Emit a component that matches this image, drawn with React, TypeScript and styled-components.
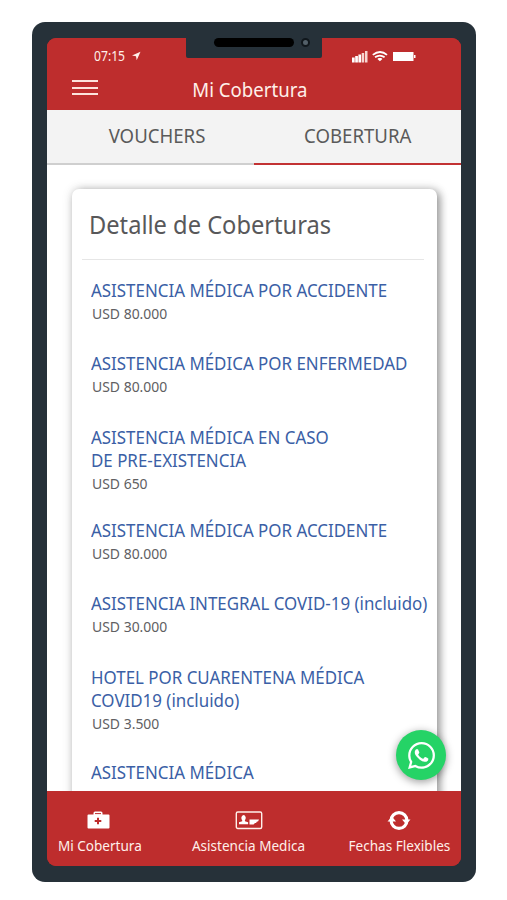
import React from 'react';
import styled, { createGlobalStyle } from 'styled-components';

const Global = createGlobalStyle`
  * { box-sizing: border-box; }
  body { margin: 0; background: #fff; font-family: "Noto Sans", "Open Sans", sans-serif; }
`;

const Page = styled.div`
  width: 507px;
  height: 900px;
  padding: 22px 0 0 32px;
  overflow: hidden;
`;

const Phone = styled.div`
  position: relative;
  width: 444px;
  height: 859.5px;
  padding: 15.5px 15px 15.5px;
  border-radius: 13px;
  background: #263139;
`;

const Screen = styled.div`
  display: flex;
  flex-direction: column;
  position: relative;
  height: 100%;
  border-radius: 9px;
  overflow: hidden;
  background: #be2d2d;
`;

const Notch = styled.div`
  position: absolute;
  top: 15px;
  left: 154px;
  z-index: 2;
  width: 136px;
  height: 20.5px;
  padding-left: 28px;
  display: flex;
  gap: 7px;
  background: #263139;
  border-radius: 0 0 2px 2px;
`;

const Speaker = styled.div`
  width: 80px;
  height: 9px;
  margin-top: 1px;
  border-radius: 5px;
  background: #000;
`;

const Camera = styled.div`
  width: 9px;
  height: 9px;
  margin-top: 1px;
  border-radius: 50%;
  border: 2px solid #10171c;
  background: #536069;
`;

const Header = styled.header`
  flex: none;
  height: 72.5px;
  background: #be2d2d;
  color: #fff0ea;
`;

const StatusBar = styled.div`
  display: flex;
  align-items: center;
  gap: 2px;
  height: 37px;
  padding: 0 45px 0 47px;
`;

const StatusIcons = styled.svg`
  margin-left: auto;
`;

const TitleBar = styled.div`
  display: grid;
  grid-template-columns: 1fr auto 1fr;
  align-items: center;
  height: 29px;
  padding: 0 34px 0 25px;
`;

const MenuButton = styled.button`
  display: flex;
  flex-direction: column;
  justify-content: space-between;
  width: 26px;
  height: 15px;
  margin-top: -3px;
  padding: 0;
  border: 0;
  background: none;
`;

const MenuLine = styled.span`
  height: 2px;
  background: #fde3dc;
`;

const Label = styled.span<{ $size: number; $scale: number; $origin?: string }>`
  display: inline-block;
  font-size: ${p => p.$size}px;
  white-space: nowrap;
  transform: scaleX(${p => p.$scale});
  transform-origin: ${p => p.$origin ?? 'left'} center;
`;

const Tabs = styled.nav`
  flex: none;
  display: grid;
  grid-template-columns: 1fr 1fr;
  height: 55px;
  background: #f3f3f3;
`;

const Tab = styled.button<{ $active?: boolean }>`
  display: flex;
  align-items: center;
  justify-content: center;
  padding: 0 0 2px ${p => (p.$active ? 0 : 14)}px;
  border: 0;
  border-bottom: 2px solid ${p => (p.$active ? '#c23233' : '#cfcfcf')};
  background: none;
  color: #5a5a5a;
  font-family: inherit;
`;

const Content = styled.main`
  flex: 1;
  min-height: 0;
  overflow: hidden;
  padding: 23.5px 24px 0 25px;
  background: #fff;
`;

const Card = styled.section`
  height: 700px;
  padding: 13px 13px 0 10px;
  border-radius: 7px;
  background: #fff;
  box-shadow: 3px 2px 8px rgba(0, 0, 0, 0.38), 0 0 12px rgba(0, 0, 0, 0.12);
`;

const CardTitle = styled.h1`
  margin: 0;
  height: 58px;
  padding-left: 7px;
  font-size: 25px;
  line-height: 44px;
  font-weight: 400;
  color: #58585a;
  border-bottom: 1px solid #e6e6e6;
`;

const List = styled.ul`
  margin: 0;
  padding: 19px 0 0 9px;
  list-style: none;
`;

const Item = styled.li<{ $gap: number }>`
  margin-bottom: ${p => p.$gap}px;
`;

const Name = styled.div`
  height: 23px;
  line-height: 23px;
  color: #3b5fa6;
`;

const Amount = styled.div`
  height: 23px;
  padding-left: 1px;
  line-height: 22px;
  color: #606062;
`;

const BottomNav = styled.nav`
  flex: none;
  display: flex;
  justify-content: space-between;
  height: 75px;
  padding: 18px 18px 0 11px;
  background: #be2d2d;
  color: #fff0ea;
`;

const NavItem = styled.div<{ $width: number }>`
  display: flex;
  flex-direction: column;
  align-items: center;
  width: ${p => p.$width}px;
`;

const NavIcon = styled.svg<{ $shift?: number }>`
  flex: none;
  width: 28px;
  height: 22px;
  margin-left: ${p => p.$shift ?? 0}px;
  margin-bottom: 4px;
`;

const Fab = styled.button`
  position: absolute;
  right: 15px;
  bottom: 86px;
  width: 50px;
  height: 50px;
  display: flex;
  align-items: center;
  justify-content: center;
  padding: 0;
  border: 0;
  border-radius: 50%;
  background: #25d366;
  box-shadow: 0 2px 9px rgba(0, 0, 0, 0.4);
`;

const items = [
  { lines: ['ASISTENCIA MÉDICA POR ACCIDENTE'], amount: 'USD 80.000', gap: 27.6 },
  { lines: ['ASISTENCIA MÉDICA POR ENFERMEDAD'], amount: 'USD 80.000', gap: 27.6 },
  { lines: ['ASISTENCIA MÉDICA EN CASO', 'DE PRE-EXISTENCIA'], amount: 'USD 650', gap: 24 },
  { lines: ['ASISTENCIA MÉDICA POR ACCIDENTE'], amount: 'USD 80.000', gap: 27.6 },
  { lines: ['ASISTENCIA INTEGRAL COVID-19 (incluido)'], amount: 'USD 30.000', gap: 27.6 },
  { lines: ['HOTEL POR CUARENTENA MÉDICA', 'COVID19 (incluido)'], amount: 'USD 3.500', gap: 26.5 },
  { lines: ['ASISTENCIA MÉDICA'], gap: 0 },
];

export default function App() {
  return (
    <Page>
      <Global />
      <Phone>
        <Notch>
          <Speaker />
          <Camera />
        </Notch>
        <Screen>
          <Header>
            <StatusBar>
              <Label $size={13.5} $scale={0.9}>07:15</Label>
              <svg width="10" height="10" viewBox="0 0 10 10">
                <path d="M9.5.8 1 4.500l4 .7L5.700 9.300Z" fill="#fff0ea" />
              </svg>
              <StatusIcons width="64" height="14" viewBox="0 0 64 14">
                <g fill="#fff">
                  <path d="M0 8.500h2.700v5H0zM3.200 7h2.700v6.500H3.200zM6.400 5.500h2.700v8H6.400z" />
                  <path d="M9.700 4h2.500v9.500H9.700zM13 2h2.500v11.500H13z" fill="#f8d5d0" />
                  <path d="M41 3h20.500v9H41zM62 6h1.500v3H62z" />
                  <path d="m26.700 8.900 2.500 0 1.200 1-2.500 2.400-2.500-2.400z" />
                </g>
                <g fill="none" stroke="#fff" strokeWidth="1.800">
                  <path d="M20.800 5.900q7.300-5.800 14.200 0M23 8.300q4.900-3.500 9.600 0" />
                </g>
              </StatusIcons>
            </StatusBar>
            <TitleBar>
              <MenuButton aria-label="Menú">
                <MenuLine />
                <MenuLine />
                <MenuLine />
              </MenuButton>
              <Label $size={20} $scale={0.93} $origin="center">Mi Cobertura</Label>
            </TitleBar>
          </Header>
          <Tabs>
            <Tab><Label $size={20} $scale={0.93} $origin="center">VOUCHERS</Label></Tab>
            <Tab $active><Label $size={20} $scale={0.93} $origin="center">COBERTURA</Label></Tab>
          </Tabs>
          <Content>
            <Card>
              <CardTitle><Label $size={25} $scale={0.946}>Detalle de Coberturas</Label></CardTitle>
              <List>
                {items.map((item, i) => (
                  <Item key={i} $gap={item.gap}>
                    {item.lines.map(line => (
                      <Name key={line}><Label $size={17.8} $scale={0.951}>{line}</Label></Name>
                    ))}
                    {item.amount && <Amount><Label $size={14.5} $scale={0.962}>{item.amount}</Label></Amount>}
                  </Item>
                ))}
              </List>
            </Card>
          </Content>
          <BottomNav>
            <NavItem $width={84}>
              <NavIcon $shift={-4} viewBox="0 0 28 22">
                <path d="M3.500 5.500h6V4q0-1.500 1.500-1.500h6q1.500 0 1.500 1.500v1.500h6q1 0 1 1v12q0 1-1 1h-20q-1 0-1-1v-12q0-1 1-1z" fill="#fff" />
                <path d="M11 4.600h6" stroke="#be2d2d" />
                <path d="M14 8.700v6.600M10.700 12h6.600" stroke="#be2d2d" strokeWidth="2" />
              </NavIcon>
              <Label $size={14.5} $scale={0.935} $origin="center">Mi Cobertura</Label>
            </NavItem>
            <NavItem $width={91}>
              <NavIcon viewBox="0 0 28 22">
                <rect x="1.300" y="3" width="25.400" height="16.500" rx="1.500" fill="none" stroke="#fff0ea" strokeWidth="1.400" />
                <path d="M8.500 6a2.500 3 0 0 1 1.400 5.200v1l3.200 1V15.300H4v-2.100l3.200-1v-1A2.500 3 0 0 1 8.500 6zM14.500 10.500h9.500l-1 2h-1l-1 1.500h-1L18.500 15.500h-4z" fill="#fff" />
              </NavIcon>
              <Label $size={14.5} $scale={0.935} $origin="center">Asistencia Medica</Label>
            </NavItem>
            <NavItem $width={88}>
              <NavIcon viewBox="0 0 28 22">
                <circle cx="14" cy="11.500" r="7.900" fill="none" stroke="#fff" strokeWidth="3.200" />
                <path d="M2.500 12.500 7 7.500l4 5zM17 10.500h8.500L21.200 15.500z" fill="#fff" />
              </NavIcon>
              <Label $size={14.5} $scale={0.935} $origin="center">Fechas Flexibles</Label>
            </NavItem>
          </BottomNav>
          <Fab aria-label="WhatsApp">
            <svg width="27" height="27" viewBox="0 0 24 24" fill="#fff">
              <path d="M17.472 14.382c-.297-.149-1.758-.867-2.030-.967-.273-.099-.471-.148-.670.150-.197.297-.767.966-.940 1.164-.173.199-.347.223-.644.075-.297-.150-1.255-.463-2.390-1.475-.883-.788-1.480-1.761-1.653-2.059-.173-.297-.018-.458.130-.606.134-.133.298-.347.446-.520.149-.174.198-.298.298-.497.099-.198.050-.371-.025-.520-.075-.149-.669-1.612-.916-2.207-.242-.579-.487-.500-.669-.510-.173-.008-.371-.010-.570-.010-.198 0-.520.074-.792.372-.272.297-1.040 1.016-1.040 2.479 0 1.462 1.065 2.875 1.213 3.074.149.198 2.096 3.200 5.077 4.487.709.306 1.262.489 1.694.625.712.227 1.360.195 1.871.118.571-.085 1.758-.719 2.006-1.413.248-.694.248-1.289.173-1.413-.074-.124-.272-.198-.570-.347" />
              <path fillRule="evenodd" d="M12.050 0C5.495 0 .160 5.335.157 11.892c0 2.096.547 4.142 1.588 5.945L.057 24l6.305-1.654a11.882 11.882 0 0 0 5.683 1.448h.005c6.554 0 11.890-5.335 11.893-11.893A11.821 11.821 0 0 0 20.465 3.488 11.815 11.815 0 0 0 12.050 0zM12.045 21.785h-.004a9.870 9.870 0 0 1-5.031-1.378l-.361-.214-3.741.982.998-3.648-.235-.374a9.860 9.860 0 0 1-1.510-5.260C2.162 6.443 6.597 2.009 12.050 2.009a9.825 9.825 0 0 1 6.988 2.898 9.825 9.825 0 0 1 2.893 6.994c-.003 5.450-4.437 9.884-9.886 9.884z" />
            </svg>
          </Fab>
        </Screen>
      </Phone>
    </Page>
  );
}
